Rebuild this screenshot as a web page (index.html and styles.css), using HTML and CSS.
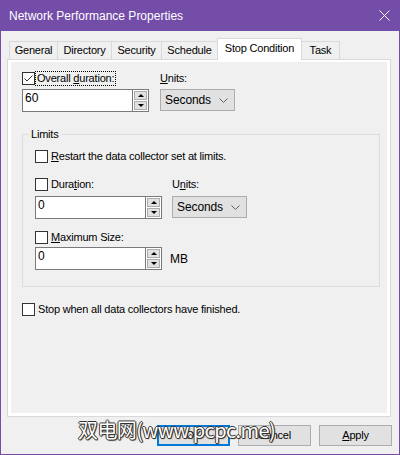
FILE: index.html
```html
<!DOCTYPE html>
<html>
<head>
<meta charset="utf-8">
<title>Network Performance Properties</title>
<link rel="stylesheet" href="styles.css">
</head>
<body>
<div class="window">
  <div class="titlebar">
    <span class="title">Network Performance Properties</span>
    <svg class="close" width="11" height="11" viewBox="0 0 11 11"><path d="M0.5 0.5L10.5 10.5M10.5 0.5L0.5 10.5" stroke="#fff" stroke-width="1" fill="none"/></svg>
  </div>
  <div class="client">
    <div class="tabs">
      <div class="tab t-general">General</div>
      <div class="tab t-directory">Directory</div>
      <div class="tab t-security">Security</div>
      <div class="tab t-schedule">Schedule</div>
      <div class="tab t-stop active">Stop Condition</div>
      <div class="tab t-task">Task</div>
    </div>
    <div class="panel">
      <div class="page">
        <div class="row">
          <div class="col">
            <div class="check">
              <span class="box"><svg width="11" height="11" viewBox="0 0 11 11"><path d="M1.5 5.5L4 8L9.5 2.5" stroke="#333" stroke-width="1" fill="none"/></svg></span>
              <span class="text focus">Overall <u>d</u>uration:</span>
            </div>
            <div class="spinbox">
              <div class="field">60</div>
              <div class="spin">
                <div class="sbtn"><span class="up"></span></div>
                <div class="sbtn"><span class="down"></span></div>
              </div>
            </div>
          </div>
          <div class="col units">
            <div class="lbl"><u>U</u>nits:</div>
            <div class="combo"><span>Seconds</span><svg width="9" height="5" viewBox="0 0 9 5"><path d="M0.5 0.5L4.5 4.5L8.5 0.5" stroke="#606060" stroke-width="1" fill="none"/></svg></div>
          </div>
        </div>

        <fieldset class="group">
          <legend>Limits</legend>
          <div class="group-body">
            <div class="check">
              <span class="box"></span>
              <span class="text"><u>R</u>estart the data collector set at limits.</span>
            </div>
            <div class="row duration">
              <div class="col">
                <div class="check">
                  <span class="box"></span>
                  <span class="text">Dura<u>t</u>ion:</span>
                </div>
                <div class="spinbox">
                  <div class="field">0</div>
                  <div class="spin">
                    <div class="sbtn"><span class="up"></span></div>
                    <div class="sbtn"><span class="down"></span></div>
                  </div>
                </div>
              </div>
              <div class="col units">
                <div class="lbl">U<u>n</u>its:</div>
                <div class="combo"><span>Seconds</span><svg width="9" height="5" viewBox="0 0 9 5"><path d="M0.5 0.5L4.5 4.5L8.5 0.5" stroke="#606060" stroke-width="1" fill="none"/></svg></div>
              </div>
            </div>
            <div class="maxsize">
              <div class="check">
                <span class="box"></span>
                <span class="text"><u>M</u>aximum Size:</span>
              </div>
              <div class="size-row">
                <div class="spinbox">
                  <div class="field">0</div>
                  <div class="spin">
                    <div class="sbtn"><span class="up"></span></div>
                    <div class="sbtn"><span class="down"></span></div>
                  </div>
                </div>
                <span class="unit">MB</span>
              </div>
            </div>
          </div>
        </fieldset>

        <div class="check stop">
          <span class="box"></span>
          <span class="text">Stop when all data collectors have finished.</span>
        </div>
      </div>
    </div>
    <div class="buttons">
      <div class="btn default">OK</div>
      <div class="btn">Cancel</div>
      <div class="btn"><u>A</u>pply</div>
    </div>
  </div>
  <div class="watermark">双电网(www.pcpc.me)</div>
</div>
</body>
</html>
```

FILE: styles.css
```css
html, body {
  margin: 0;
  padding: 0;
}

body {
  width: 400px;
  height: 455px;
  overflow: hidden;
  background: #f0f0f0;
  font-family: "Liberation Sans", Arial, sans-serif;
  font-size: 11px;
  letter-spacing: -0.2px;
  color: #000;
}

u {
  text-decoration: underline;
  text-underline-offset: 1px;
  text-decoration-thickness: 1px;
}

.window {
  position: relative;
  width: 400px;
  height: 455px;
  box-sizing: border-box;
  border: 1px solid #744da9;
  border-top: 0;
  background: #f0f0f0;
  display: flex;
  flex-direction: column;
}

.titlebar {
  height: 31px;
  flex: none;
  background: #744da9;
  display: flex;
  align-items: center;
  padding: 0 9px 0 8px;
}

.title {
  color: #fff;
  font-size: 12px;
  letter-spacing: 0;
  line-height: 16px;
}

.close {
  margin-left: auto;
  display: block;
}

.client {
  flex: 1;
  padding: 7px 7px 0 6px;
  display: flex;
  flex-direction: column;
}

/* tabs */
.tabs {
  display: flex;
  align-items: flex-end;
  height: 21px;
  padding-left: 2px;
}

.tab {
  box-sizing: border-box;
  height: 18px;
  line-height: 17px;
  text-align: center;
  border: 1px solid #d9d9d9;
  border-bottom: 0;
  background: #f0f0f0;
  margin-left: -1px;
  white-space: nowrap;
}

.tab:first-child {
  margin-left: 0;
}

.tab.active {
  position: relative;
  z-index: 1;
  height: 22px;
  line-height: 19px;
  margin-bottom: -1px;
  background: #fff;
}

.t-general { width: 49px; }
.t-directory { width: 55px; }
.t-security { width: 51px; }
.t-schedule { width: 57px; }
.t-stop { width: 85px; }
.t-task { width: 39px; }

.panel {
  box-sizing: border-box;
  width: 384px;
  height: 358px;
  border: 1px solid #d9d9d9;
  background: #fff;
  padding: 2px 3px 3px 3px;
  flex: none;
}

.page {
  box-sizing: border-box;
  height: 100%;
  background: #f0f0f0;
  padding: 10px 7px 0 11px;
}

/* controls */
.row {
  display: flex;
  align-items: flex-start;
}

.col {
  display: flex;
  flex-direction: column;
}

.units {
  margin-left: 11px;
}

.check {
  display: flex;
  align-items: center;
  height: 13px;
  line-height: 13px;
  white-space: nowrap;
}

.box {
  box-sizing: border-box;
  width: 13px;
  height: 13px;
  border: 1px solid #333;
  background: #fff;
  flex: none;
  display: flex;
}

.box svg {
  display: block;
}

.check .text {
  margin-left: 3px;
}

.check .text.focus {
  margin-left: 1px;
  padding: 0 1px;
  outline: 1px dotted #000;
}

.col .check,
.lbl {
  margin-bottom: 4px;
}

.lbl {
  height: 13px;
  line-height: 13px;
}

.spinbox {
  display: flex;
  width: 127px;
  height: 23px;
}

.field {
  box-sizing: border-box;
  width: 111px;
  height: 23px;
  border: 1px solid #7a7a7a;
  background: #fff;
  padding: 1px 2px;
  line-height: 15px;
  font-size: 12px;
  letter-spacing: 0;
}

.spin {
  box-sizing: border-box;
  width: 16px;
  height: 23px;
  border: 1px solid #7a7a7a;
  border-left: 0;
  background: #fff;
  padding: 1px;
  display: flex;
  flex-direction: column;
  gap: 1px;
}

.sbtn {
  flex: 1;
  box-sizing: border-box;
  border: 1px solid #adadad;
  background: #e1e1e1;
  display: flex;
  align-items: center;
  justify-content: center;
}

.up {
  width: 0;
  height: 0;
  border-left: 3px solid transparent;
  border-right: 3px solid transparent;
  border-bottom: 3px solid #000;
}

.down {
  width: 0;
  height: 0;
  border-left: 3px solid transparent;
  border-right: 3px solid transparent;
  border-top: 3px solid #000;
}

.combo {
  box-sizing: border-box;
  width: 75px;
  height: 22px;
  border: 1px solid #adadad;
  background: #e1e1e1;
  display: flex;
  align-items: center;
  padding: 0 6px 0 4px;
  font-size: 12px;
  letter-spacing: -0.1px;
}

.combo svg {
  margin-left: auto;
  display: block;
}

/* group box */
.group {
  margin: 16px 0 0 0;
  padding: 0;
  border: 1px solid #dcdcdc;
  min-width: 0;
}

.group legend {
  margin-left: 6px;
  padding: 0 2px;
  line-height: 13px;
}

.group-body {
  padding: 9px 12px 16px 12px;
}

.duration {
  margin-top: 15px;
}

.duration .col .check,
.duration .lbl {
  margin-bottom: 5px;
}

.duration .units {
  margin-left: 10px;
}

.maxsize {
  margin-top: 12px;
}

.maxsize .check {
  margin-bottom: 3px;
}

.size-row {
  display: flex;
  align-items: center;
}

.unit {
  margin-left: 8px;
  font-size: 12px;
  letter-spacing: 0;
}

.stop {
  margin-top: 16px;
}

/* buttons */
.buttons {
  display: flex;
  justify-content: flex-end;
  gap: 8px;
  margin-top: 8px;
}

.btn {
  box-sizing: border-box;
  width: 73px;
  height: 21px;
  border: 1px solid #adadad;
  background: #e1e1e1;
  text-align: center;
  line-height: 19px;
}

.btn.default {
  border: 2px solid #0078d7;
  line-height: 17px;
}

/* watermark overlay */
.watermark {
  position: absolute;
  left: 77px;
  top: 419px;
  font-family: "Noto Sans CJK SC", "Noto Sans", sans-serif;
  font-size: 20px;
  line-height: 22px;
  letter-spacing: -0.6px;
  color: #fff;
  text-shadow: 1px 0 0 #333, -1px 0 0 #333, 0 1px 0 #333, 0 -1px 0 #333, 1px 1px 1px #333;
  white-space: nowrap;
}
```
